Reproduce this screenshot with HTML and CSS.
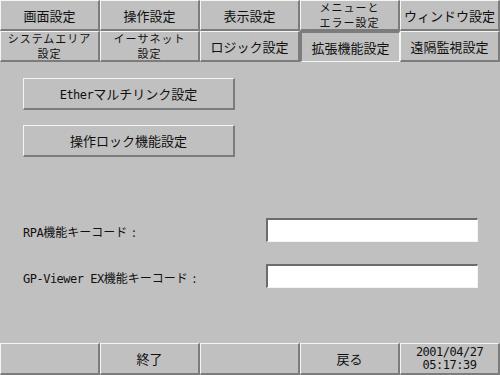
FILE: index.html
```html
<!DOCTYPE html>
<html lang="ja">
<head>
  <meta charset="UTF-8">
  <meta name="viewport" content="width=device-width, initial-scale=1.0">
  <title>拡張機能設定</title>
  <link rel="stylesheet" href="styles.css">
</head>
<body>
<div class="screen">
  <div class="tabs">
    <div class="tab">画面設定</div>
    <div class="tab">操作設定</div>
    <div class="tab">表示設定</div>
    <div class="tab two">メニューと<br>エラー設定</div>
    <div class="tab">ウィンドウ設定</div>
    <div class="tab two">システムエリア<br>設定</div>
    <div class="tab two">イーサネット<br>設定</div>
    <div class="tab">ロジック設定</div>
    <div class="tab active">拡張機能設定</div>
    <div class="tab">遠隔監視設定</div>
  </div>

  <div class="content">
    <button class="btn" type="button"><span class="latin">Ether</span>マルチリンク設定</button>
    <button class="btn" type="button">操作ロック機能設定</button>

    <div class="fields">
      <div class="field">
        <label class="lbl" for="rpa"><span class="latin">RPA</span>機能キーコード<span class="colon">:</span></label>
        <input class="box" type="text" id="rpa">
      </div>
      <div class="field">
        <label class="lbl" for="gpv"><span class="latin">GP-Viewer EX</span>機能キーコード<span class="colon">:</span></label>
        <input class="box" type="text" id="gpv">
      </div>
    </div>
  </div>

  <div class="footer">
    <div class="tab"></div>
    <div class="tab">終了</div>
    <div class="tab"></div>
    <div class="tab">戻る</div>
    <div class="tab clock">2001/04/27<br>05:17:39</div>
  </div>
</div>
</body>
</html>
```

FILE: styles.css
```css
body {
  margin: 0;
  background-color: #c0c0c0;
  font-family: "Noto Sans CJK JP", "DejaVu Sans", sans-serif;
  font-size: 12px;
  color: #101010;
}

.screen {
  width: 500px;
  height: 375px;
  display: flex;
  flex-direction: column;
  background-color: #c0c0c0;
}

.tabs {
  display: grid;
  grid-template-columns: repeat(5, 100px);
  grid-template-rows: 31px 31px;
}

.tab {
  box-sizing: border-box;
  display: flex;
  align-items: center;
  justify-content: center;
  text-align: center;
  background-color: #c0c0c0;
  border-top: 1px solid #f4f4f0;
  border-left: 1px solid #f4f4f0;
  border-bottom: 2px solid #7c7c7c;
  border-right: 2px solid #7c7c7c;
  font-size: 13px;
  line-height: 15px;
}

.tab.two {
  font-size: 11px;
  line-height: 15px;
  letter-spacing: 1px;
}

.tab.active {
  border-top: 2px solid #7c7c7c;
  border-left: 2px solid #7c7c7c;
  border-bottom: 1px solid #f4f4f0;
  border-right: 1px solid #f4f4f0;
}

.content {
  flex: 1;
  padding: 16px 0 0 23px;
  display: flex;
  flex-direction: column;
  align-items: flex-start;
}

.btn {
  box-sizing: border-box;
  width: 212px;
  height: 32px;
  margin-bottom: 15px;
  background-color: #c0c0c0;
  border-top: 1px solid #f4f4f0;
  border-left: 1px solid #f4f4f0;
  border-bottom: 2px solid #7c7c7c;
  border-right: 2px solid #7c7c7c;
  font-family: inherit;
  font-size: 13px;
  color: #101010;
  padding: 0;
}

.latin {
  font-family: "DejaVu Sans Mono", monospace;
  font-size: 12px;
  letter-spacing: -0.5px;
}

.fields {
  margin-top: 46px;
  width: 455px;
  display: flex;
  flex-direction: column;
  gap: 22px;
}

.field {
  display: flex;
  justify-content: space-between;
  align-items: center;
}

.lbl {
  font-size: 12px;
  padding-top: 3px;
}

.colon {
  margin-left: 5px;
}

.box {
  box-sizing: border-box;
  width: 212px;
  height: 24px;
  background-color: #fff;
  border-top: 2px solid #6c6c6c;
  border-left: 2px solid #6c6c6c;
  border-bottom: 1px solid #f4f4f0;
  border-right: 1px solid #f4f4f0;
  margin: 0;
  padding: 0;
}

.footer {
  display: grid;
  grid-template-columns: repeat(5, 100px);
  height: 32px;
}

.clock {
  font-family: "DejaVu Sans Mono", monospace;
  font-size: 12px;
  line-height: 13px;
  letter-spacing: -0.5px;
}
```
